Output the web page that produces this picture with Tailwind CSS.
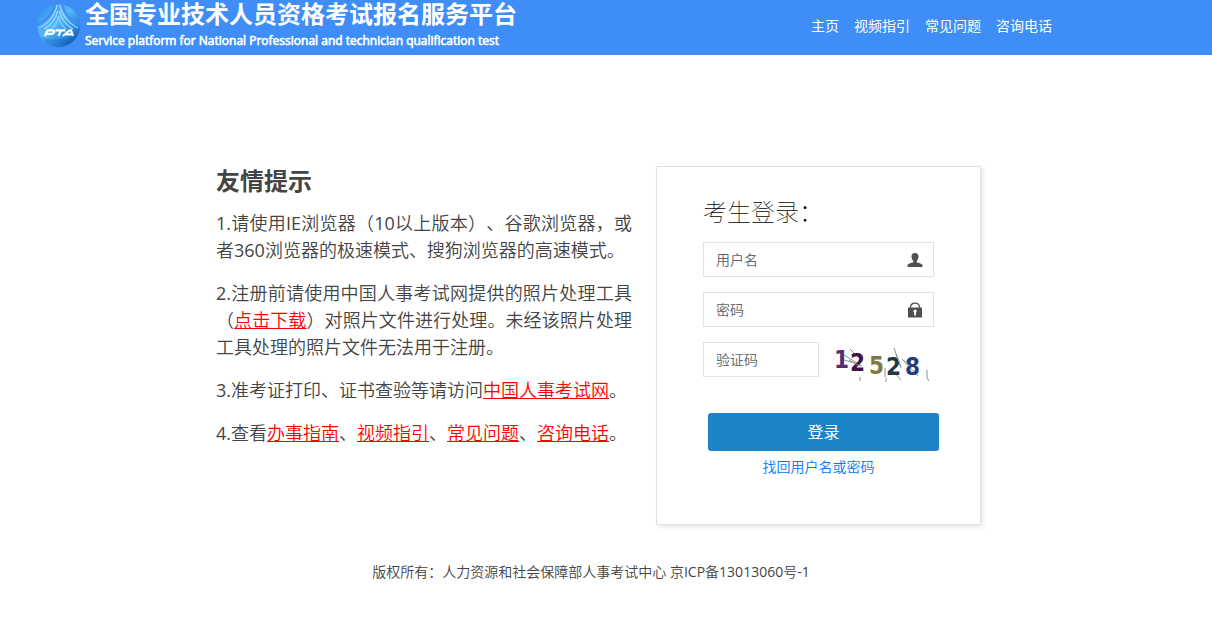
<!DOCTYPE html>
<html lang="zh-CN">
<head>
<meta charset="utf-8">
<meta name="viewport" content="width=device-width, initial-scale=1">
<title>全国专业技术人员资格考试报名服务平台</title>
<script src="https://cdn.jsdelivr.net/npm/@tailwindcss/browser@4"></script>
</head>
<body class="bg-white font-['Open_Sans','Noto_Sans_CJK_SC',sans-serif] text-[#444] [text-spacing-trim:space-all]">
<header class="flex h-[55px] items-start justify-between bg-[#3f8ef7] pl-9 pr-40 text-white">
  <div class="flex gap-1">
    <svg class="mt-[3px] h-[45px] w-[45px]" viewBox="0 0 45 45" aria-hidden="true">
      <defs>
        <linearGradient id="ball" x1="0.1" y1="0.2" x2="0.85" y2="0.95">
          <stop offset="0" stop-color="#3a9af0"/><stop offset="0.4" stop-color="#5ab8fa"/><stop offset="0.7" stop-color="#2f8fe2"/><stop offset="1" stop-color="#1258ac"/>
        </linearGradient>
      </defs>
      <circle cx="22.5" cy="22.5" r="21.5" fill="url(#ball)"/>
      <path d="M19 0C18 9 11 17 0 23M26 0C27 9 34 17 45 23" fill="none" stroke="#3f8ef7" stroke-width="2.2"/>
      <path d="M21 2C19 13 13 20 3 25M24 2C26 13 32 20 42 25" fill="none" stroke="#a9dcff" stroke-width="1.200"/>
      <path d="M21.500 8C20 17 15 22 8 26M23.500 8C25 17 30 22 37 26" fill="none" stroke="#a9dcff" stroke-width="1.200"/>
      <path d="M22.500 13C21.500 19 19 23 15 26M22.500 13C23.500 19 26 23 30 26" fill="none" stroke="#8fd0ff" stroke-width="1.200"/>
      <path d="M5 34Q22 40 41 32Q37 43 23 44Q10 43 5 34Z" fill="#1560b6" opacity="0.35"/>
      <g fill="none" stroke="#fff" stroke-width="2.200" stroke-linejoin="round">
        <path d="M9 33L11.500 27.300H16.500C19.500 27.300 18.500 30.800 15.500 30.800H11M19.500 27.300H29.500M25 27.300L22.500 33M27 33L33.500 27.300H35L37 33M30 31.300H36"/>
      </g>
    </svg>
    <div>
      <h1 class="text-2xl leading-[28px] font-bold">全国专业技术人员资格考试报名服务平台</h1>
      <p class="text-xs leading-[26px] [-webkit-text-stroke:0.6px_currentColor]">Service platform for National Professional and technician qualification test</p>
    </div>
  </div>
  <nav class="flex gap-[15px] pt-4 text-sm leading-5">
    <a href="#">主页</a><a href="#">视频指引</a><a href="#">常见问题</a><a href="#">咨询电话</a>
  </nav>
</header>
<main class="flex items-start justify-between gap-6 pt-[111px] pr-[231px] pl-[216px]">
  <section class="min-w-0 flex-1">
    <h2 class="mb-[14px] text-2xl leading-[30px] font-bold">友情提示</h2>
    <div class="space-y-4 text-justify font-['Open_Sans','Noto_Sans_CJK_SC_DemiLight','Noto_Sans_CJK_SC',sans-serif] text-lg leading-[27px]">
      <p>1.请使用IE浏览器（10以上版本）、谷歌浏览器，或者360浏览器的极速模式、搜狗浏览器的高速模式。</p>
      <p>2.注册前请使用中国人事考试网提供的照片处理工具（<a href="#" class="text-[#f00] underline">点击下载</a>）对照片文件进行处理。未经该照片处理工具处理的照片文件无法用于注册。</p>
      <p>3.准考证打印、证书查验等请访问<a href="#" class="text-[#f00] underline">中国人事考试网</a>。</p>
      <p>4.查看<a href="#" class="text-[#f00] underline">办事指南</a>、<a href="#" class="text-[#f00] underline">视频指引</a>、<a href="#" class="text-[#f00] underline">常见问题</a>、<a href="#" class="text-[#f00] underline">咨询电话</a>。</p>
    </div>
  </section>
  <form class="w-[325px] shrink-0 border border-[#e2e2e2] px-[46px] pt-7 pb-[47px] shadow-[2px_2px_4px_rgba(0,0,0,0.1)]">
    <h2 class="mb-[13px] text-2xl leading-[34px] font-thin text-black">考生登录：</h2>
    <div class="space-y-[15px]">
      <div class="flex h-[35px] w-[231px] items-center border border-[#e2e2e2] pr-[10px]">
        <input aria-label="用户名" type="text" placeholder="用户名" class="h-full min-w-0 flex-1 px-3 text-sm font-[350] outline-none placeholder:text-[#5c646c]">
        <svg class="h-4 w-4" viewBox="0 0 16 16" fill="#505050" aria-hidden="true"><path d="M8 1C10.500 1 11.700 2.700 11.500 5C11.300 7 10.500 8.200 9.700 9V10.300C11 11.100 15.300 11.300 15.500 13.500V15H.5V13.500C.7 11.300 5 11.100 6.300 10.300V9C5.500 8.200 4.700 7 4.500 5C4.300 2.700 5.500 1 8 1Z"/></svg>
      </div>
      <div class="flex h-[35px] w-[231px] items-center border border-[#e2e2e2] pr-[10px]">
        <input aria-label="密码" type="password" placeholder="密码" class="h-full min-w-0 flex-1 px-3 text-sm font-[350] outline-none placeholder:text-[#5c646c]">
        <svg class="h-4 w-4" viewBox="0 0 16 16" aria-hidden="true"><path d="M3.500 7V5.500C3.500 -0.300 12.500 -0.300 12.500 5.500V7" fill="none" stroke="#505050" stroke-width="1.200"/><path d="M1 5.500H15V15.500H1Z" fill="#505050"/><path d="M8 7.500A1.800 1.800 0 0 1 9 10.700V13.500H7.200V10.700A1.800 1.800 0 0 1 8 7.500Z" fill="#fff"/></svg>
      </div>
      <div class="flex gap-[15px]">
        <input aria-label="验证码" type="text" placeholder="验证码" class="h-[35px] w-[116px] border border-[#e2e2e2] px-3 text-sm font-[350] outline-none placeholder:text-[#5c646c]">
        <svg class="h-10 w-[100px]" viewBox="0 0 100 40" role="img" aria-label="验证码图片" font-family="DejaVu Sans Condensed, DejaVu Sans" font-weight="bold" font-size="24">
          <path d="M10 13L28 24M10 18L24 22M16 7L20 11M26 35V39M51 26V35M52 36V40M60 6L67 26M60 30L67 38M68 17L84 34M93 28V36L95 39" fill="none" stroke="#8a918e" stroke-width="1"/>
          <text x="0" y="26" fill="#55306e">1</text>
          <text x="16" y="29" fill="#3d1441">2</text>
          <text x="35" y="32" fill="#7b7a42">5</text>
          <text x="52" y="33" fill="#203a43">2</text>
          <text x="71" y="33" fill="#263b7d">8</text>
          <path d="M62 12L67 25M69 18L76 24M15 18L26 24" fill="none" stroke="#8a9290" stroke-width="1"/>
        </svg>
      </div>
    </div>
    <div class="mt-[31px] ml-[5px] w-[231px]">
      <button type="button" class="block h-[38px] w-full rounded-[3px] bg-[#1d83c7] text-base text-white">登录</button>
      <a href="#" class="mx-auto mt-[6px] block w-fit pr-2.5 text-sm leading-5 font-[350] text-[#007bff]">找回用户名或密码</a>
    </div>
  </form>
</main>
<footer class="pt-[37px] pr-[30px] text-center font-['Open_Sans','Noto_Sans_CJK_SC_DemiLight','Noto_Sans_CJK_SC',sans-serif] text-sm leading-5">版权所有：人力资源和社会保障部人事考试中心 京ICP备13013060号-1</footer>
</body>
</html>
